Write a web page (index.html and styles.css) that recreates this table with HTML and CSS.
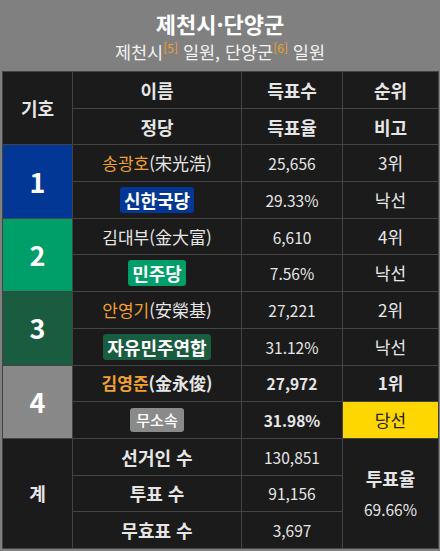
FILE: index.html
```html
<!DOCTYPE html>
<html lang="ko">
<head>
<meta charset="utf-8">
<link rel="stylesheet" href="styles.css">
</head>
<body>
<div class="page">
  <div class="title">제천시·단양군</div>
  <div class="subtitle">제천시<sup class="ref">[5]</sup> 일원, 단양군<sup class="ref">[6]</sup> 일원</div>
  <table class="results">
    <colgroup>
      <col class="c1"><col class="c2"><col class="c3"><col class="c4">
    </colgroup>
    <tr class="hd">
      <th rowspan="2">기호</th>
      <th>이름</th>
      <th>득표수</th>
      <th>순위</th>
    </tr>
    <tr class="hd">
      <th>정당</th>
      <th>득표율</th>
      <th>비고</th>
    </tr>
    <tr>
      <td rowspan="2" class="num blue">1</td>
      <td><span class="name">송광호</span>(宋光浩)</td>
      <td class="n">25,656</td>
      <td>3위</td>
    </tr>
    <tr>
      <td><span class="badge blue">신한국당</span></td>
      <td class="n">29.33%</td>
      <td>낙선</td>
    </tr>
    <tr>
      <td rowspan="2" class="num green">2</td>
      <td>김대부(金大富)</td>
      <td class="n">6,610</td>
      <td>4위</td>
    </tr>
    <tr>
      <td><span class="badge green">민주당</span></td>
      <td class="n">7.56%</td>
      <td>낙선</td>
    </tr>
    <tr>
      <td rowspan="2" class="num dgreen">3</td>
      <td><span class="name">안영기</span>(安榮基)</td>
      <td class="n">27,221</td>
      <td>2위</td>
    </tr>
    <tr>
      <td><span class="badge dgreen">자유민주연합</span></td>
      <td class="n">31.12%</td>
      <td>낙선</td>
    </tr>
    <tr class="win">
      <td rowspan="2" class="num grey">4</td>
      <td><span class="name">김영준</span>(金永俊)</td>
      <td class="n">27,972</td>
      <td>1위</td>
    </tr>
    <tr class="win">
      <td><span class="badge grey">무소속</span></td>
      <td class="n">31.98%</td>
      <td class="elected">당선</td>
    </tr>
    <tr>
      <th rowspan="3">계</th>
      <th>선거인 수</th>
      <td class="n">130,851</td>
      <td rowspan="3" class="turnout"><b>투표율</b><br><span class="n">69.66%</span></td>
    </tr>
    <tr>
      <th>투표 수</th>
      <td class="n">91,156</td>
    </tr>
    <tr>
      <th>무효표 수</th>
      <td class="n">3,697</td>
    </tr>
  </table>
</div>
</body>
</html>
```

FILE: styles.css
```css
html, body {
  margin: 0;
  padding: 0;
  background: #808080;
}
body {
  font-family: "Malgun Gothic", "Noto Sans CJK KR", "Noto Sans", sans-serif;
  color: #e8e8e8;
  font-size: 17px;
}
.page {
  padding: 0 2px;
}
.title {
  text-align: center;
  font-weight: bold;
  font-size: 22px;
  color: #ffffff;
  line-height: 28px;
  padding-top: 9px;
}
.subtitle {
  text-align: center;
  font-size: 17.5px;
  color: #f2f2f2;
  line-height: 24px;
  padding-top: 3px;
  padding-bottom: 7px;
}
.ref {
  color: #f0a028;
  font-size: 12px;
  vertical-align: 6px;
  line-height: 0;
}
.results {
  width: 436px;
  border-collapse: collapse;
  table-layout: fixed;
  background: #1b1b1b;
  border: 1px solid #222;
}
.c1 { width: 70px; }
.c2 { width: 169px; }
.c3 { width: 101px; }
.c4 { width: 96px; }
.results tr { height: 36.7px; }
.results th, .results td {
  border: 1px solid #444;
  text-align: center;
  padding: 0;
  line-height: 22px;
}
.results th {
  font-weight: bold;
  font-size: 18px;
  color: #e6e6e6;
}
.results td {
  font-weight: normal;
  color: #e6e6e6;
}
.n { font-size: 15.5px; }
.name { color: #f0a030; }
.results td.num {
  font-size: 27px;
  font-weight: bold;
  color: #ffffff;
}
.num.blue { background: #023795; }
.num.green { background: #009e68; }
.num.dgreen { background: #1a5c40; }
.num.grey { background: #888888; }
.badge {
  display: inline-block;
  color: #ffffff;
  font-weight: bold;
  font-size: 18px;
  padding: 2px 4px;
  border-radius: 3px;
  line-height: 22px;
}
.badge.blue { background: #023795; }
.badge.green { background: #009e68; }
.badge.dgreen { background: #1a5c40; }
.badge.grey { background: #8a8a8a; font-weight: normal; padding: 1px 6px; font-size: 15px; }
.win td { font-weight: bold; }
.results .win td .badge.grey { font-weight: 500; }
.results td.elected {
  background: #ffd700;
  color: #222;
  font-weight: normal;
}
.results td.turnout { line-height: 30px; }
.turnout b { font-weight: bold; font-size: 18px; }
```
